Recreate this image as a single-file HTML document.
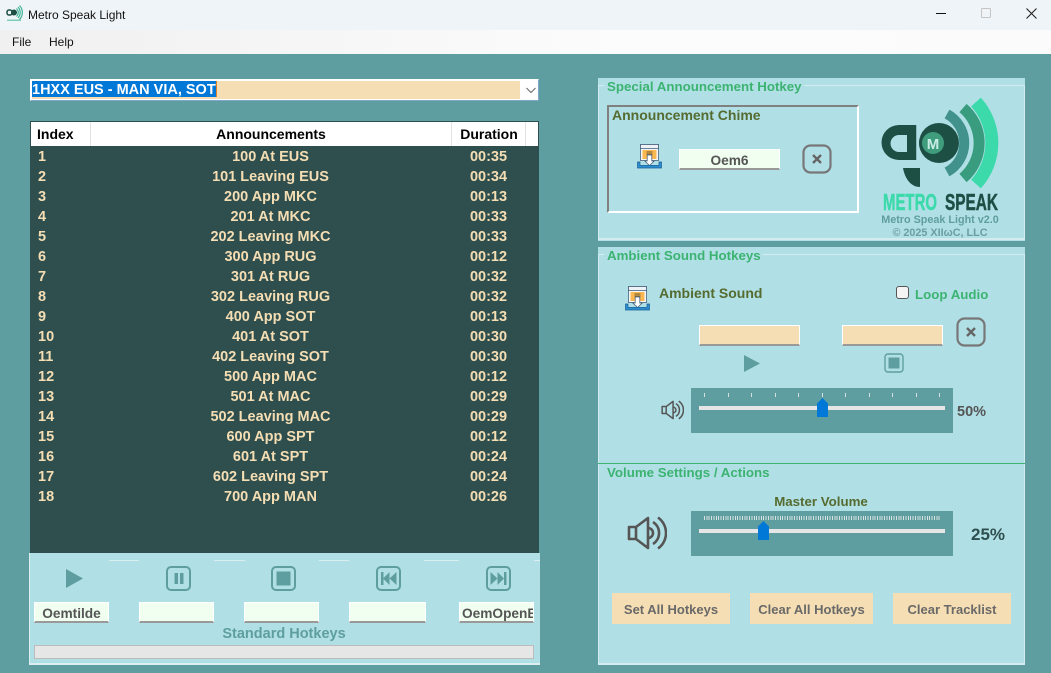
<!DOCTYPE html>
<html><head><meta charset="utf-8"><style>
html,body{margin:0;padding:0}
body{width:1051px;height:673px;overflow:hidden;position:relative;background:#5f9ea0;font-family:"Liberation Sans",sans-serif;font-size:13.3px;font-weight:bold}
.a{position:absolute;box-sizing:border-box}
.t{position:absolute;white-space:nowrap;line-height:16px;height:16px;margin-top:1px}
.c{transform:translateX(-50%)}
.g{color:#3cb371}.o{color:#556b2f}
.h{font-size:14px}
.k{position:absolute;box-sizing:border-box;height:21px;background:#f0fff0;border:2px solid #fff;border-width:1px 1px 2px 1px;border-bottom-color:#999;text-align:center;line-height:21px;color:#555;overflow:hidden;white-space:nowrap;font-size:13.7px}
.w{background:#f5deb3}
.b{position:absolute;background:#f5deb3;color:#696969;text-align:center;height:31px;line-height:33px;font-size:13px}
.l{position:absolute;background:#dceef0;height:1px}
.r{position:absolute;left:30px;width:509px;height:20px;line-height:22px;color:#f5deb3;font-size:14.5px}
.r i{font-style:normal;position:absolute;left:8px}
.r u{text-decoration:none;position:absolute;left:60px;width:361px;text-align:center}
.r s{text-decoration:none;position:absolute;left:421px;width:75px;text-align:center}
svg{position:absolute;overflow:visible}
</style></head><body>
<svg width="0" height="0" style="position:absolute"><defs>
<symbol id="file" viewBox="0 0 25 25"><rect x="3.500" y="0.500" width="18" height="16" fill="#f4f7fa" stroke="#47617c" stroke-width=".8"/><rect x="3.500" y="0.500" width="18" height="4" fill="#eef2f6" stroke="#47617c" stroke-width=".8"/><rect x="5.500" y="6" width="14" height="9" fill="#fbb850"/><path d="M9.500 8h6M9.500 10h6" stroke="#6a5a30" stroke-width=".9"/><path d="M10.200 11h4.600v6h2.400l-4.700 4.500L7.800 17h2.400z" fill="#fff" stroke="#47617c" stroke-width=".8"/><path d="M.5 18v6h24v-6h-2.500v3.300H3V18z" fill="#2b8fcf" stroke="#1c5c92" stroke-width=".7"/></symbol>
<symbol id="spk" viewBox="0 0 40 34"><path d="M2 11h7L21 2v30L9 23H2z M9 11v12" fill="none" stroke="#555" stroke-width="2.600" stroke-linejoin="round"/><path d="M21 12a5 5 0 0 1 0 10M26 6a13 13 0 0 1 0 22M31 1.500a19 19 0 0 1 0 31" fill="none" stroke="#555" stroke-width="2.600"/></symbol>
<symbol id="x" viewBox="0 0 30 30"><rect x="1.500" y="1.500" width="27" height="27" rx="7" fill="none" stroke="#777" stroke-width="2.200"/><path d="M11 11l8 8M19 11l-8 8" stroke="#666" stroke-width="2.400"/></symbol>
</defs></svg>

<!-- title bar -->
<div class="a" style="left:0;top:0;width:1051px;height:30px;background:#eff4f8"></div>
<div class="a" style="left:0;top:30px;width:1051px;height:24px;background:linear-gradient(90deg,#f0f0f0,#fcfcfc 60%,#fbfbfb)"></div>
<svg style="left:6px;top:5px" width="18" height="17" viewBox="0 0 18 17"><circle cx="8" cy="7.500" r="3" fill="#1d4f45"/><rect x="1" y="5" width="5" height="5" rx="2" fill="none" stroke="#1d4f45" stroke-width="1.500"/><path d="M10.500 3.500a5.500 5.500 0 0 1 0 8M12 2a8 8 0 0 1 0 11M13.500 .5a10 10 0 0 1 0 14" fill="none" stroke="#3cb393" stroke-width="1.200"/><rect x="1" y="14.500" width="14" height="1.500" fill="#7fcdb8"/></svg>
<div class="t" style="left:28px;top:6px;font-weight:normal;font-size:12px;color:#111">Metro Speak Light</div>
<div class="t" style="left:12px;top:33px;font-weight:normal;font-size:12px;color:#111">File</div>
<div class="t" style="left:49px;top:33px;font-weight:normal;font-size:12px;color:#111">Help</div>
<svg style="left:936px;top:8px" width="100" height="14"><path d="M0 5.500h10" stroke="#111" stroke-width="1"/><rect x="45.500" y=".5" width="9" height="9" rx="1" fill="none" stroke="#c4c4c4"/><path d="M90.500 .5l10 10M100.500 .5l-10 10" stroke="#222" stroke-width="1.100"/></svg>

<!-- combo -->
<div class="a" style="left:30px;top:79px;width:509px;height:22px;background:#fff;border:1px solid #fff;border-right-color:#7fa8c8;border-bottom-color:#7fa8c8"></div>
<div class="a w" style="left:32px;top:81px;width:488px;height:18px"></div>
<div class="a" style="left:32px;top:81px;width:185px;height:16px;background:#0078d7;border-right:1px solid #e08020"></div>
<div class="t" style="left:32px;top:81px;color:#fff;font-size:14.500px;width:185px">1HXX EUS - MAN VIA, SOT</div>
<svg style="left:526px;top:87px" width="10" height="7"><path d="M.5 1l4.500 4.500L9.500 1" fill="none" stroke="#666"/></svg>

<!-- table -->
<div class="a" style="left:30px;top:121px;width:509px;height:432px;background:#2f4f4f"></div>
<div class="a" style="left:31px;top:122px;width:507px;height:24px;background:#fff"></div>
<div class="a" style="left:90px;top:122px;width:1px;height:24px;background:#e3e3e3"></div>
<div class="a" style="left:451px;top:122px;width:1px;height:24px;background:#e3e3e3"></div>
<div class="a" style="left:525px;top:122px;width:1px;height:24px;background:#e3e3e3"></div>
<div class="t h" style="left:37px;top:125px;color:#000">Index</div>
<div class="t c h" style="left:271px;top:125px;color:#000">Announcements</div>
<div class="t c h" style="left:489px;top:125px;color:#000">Duration</div>
<div class="r" style="top:146px"><i>1</i><u>100 At EUS</u><s>00:35</s></div>
<div class="r" style="top:166px"><i>2</i><u>101 Leaving EUS</u><s>00:34</s></div>
<div class="r" style="top:186px"><i>3</i><u>200 App MKC</u><s>00:13</s></div>
<div class="r" style="top:206px"><i>4</i><u>201 At MKC</u><s>00:33</s></div>
<div class="r" style="top:226px"><i>5</i><u>202 Leaving MKC</u><s>00:33</s></div>
<div class="r" style="top:246px"><i>6</i><u>300 App RUG</u><s>00:12</s></div>
<div class="r" style="top:266px"><i>7</i><u>301 At RUG</u><s>00:32</s></div>
<div class="r" style="top:286px"><i>8</i><u>302 Leaving RUG</u><s>00:32</s></div>
<div class="r" style="top:306px"><i>9</i><u>400 App SOT</u><s>00:13</s></div>
<div class="r" style="top:326px"><i>10</i><u>401 At SOT</u><s>00:30</s></div>
<div class="r" style="top:346px"><i>11</i><u>402 Leaving SOT</u><s>00:30</s></div>
<div class="r" style="top:366px"><i>12</i><u>500 App MAC</u><s>00:12</s></div>
<div class="r" style="top:386px"><i>13</i><u>501 At MAC</u><s>00:29</s></div>
<div class="r" style="top:406px"><i>14</i><u>502 Leaving MAC</u><s>00:29</s></div>
<div class="r" style="top:426px"><i>15</i><u>600 App SPT</u><s>00:12</s></div>
<div class="r" style="top:446px"><i>16</i><u>601 At SPT</u><s>00:24</s></div>
<div class="r" style="top:466px"><i>17</i><u>602 Leaving SPT</u><s>00:24</s></div>
<div class="r" style="top:486px"><i>18</i><u>700 App MAN</u><s>00:26</s></div>

<!-- left bottom panel -->
<div class="a" style="left:29px;top:553px;width:511px;height:112px;background:#b0e0e6;border-left:1px solid #dceef0;border-bottom:2px solid #dceef0"></div>
<div class="l" style="left:109px;top:560px;width:30px"></div>
<div class="l" style="left:214px;top:560px;width:31px"></div>
<div class="l" style="left:319px;top:560px;width:30px"></div>
<div class="l" style="left:424px;top:560px;width:35px"></div>
<div class="l" style="left:534px;top:560px;width:6px"></div>
<svg style="left:66px;top:569px" width="18" height="20"><path d="M0 0l17 9.500L0 19z" fill="#5f9ea0"/></svg>
<svg style="left:166px;top:566px" width="26" height="26" fill="none"><rect x="1" y="1" width="23" height="23" rx="4" stroke="#5f9ea0" stroke-width="2"/><path d="M8.500 7h3.500v11H8.500zM14 7h3.500v11H14z" fill="#5f9ea0"/></svg>
<svg style="left:271px;top:566px" width="26" height="26" fill="none"><rect x="1" y="1" width="23" height="23" rx="4" stroke="#5f9ea0" stroke-width="2"/><rect x="5.500" y="5.500" width="14" height="14" fill="#5f9ea0"/></svg>
<svg style="left:376px;top:566px" width="26" height="26" fill="none"><rect x="1" y="1" width="23" height="23" rx="4" stroke="#5f9ea0" stroke-width="2"/><path d="M5 6h2.500v13H5zM13.500 6v13L7 12.500zM20.500 6v13l-7-6.500z" fill="#5f9ea0"/></svg>
<svg style="left:486px;top:566px" width="26" height="26" fill="none"><rect x="1" y="1" width="23" height="23" rx="4" stroke="#5f9ea0" stroke-width="2"/><path d="M4.500 6v13l7-6.500zM11.500 6v13l6.500-6.500zM18 6h2.500v13H18z" fill="#5f9ea0"/></svg>
<div class="k" style="left:34px;top:602px;width:75px">Oemtilde</div>
<div class="k" style="left:139px;top:602px;width:75px"></div>
<div class="k" style="left:244px;top:602px;width:75px"></div>
<div class="k" style="left:349px;top:602px;width:77px"></div>
<div class="k" style="left:459px;top:602px;width:75px;text-align:left;padding-left:2px">OemOpenBrackets</div>
<div class="t c" style="left:284px;top:625px;color:#5f9ea0;font-size:14.500px">Standard Hotkeys</div>
<div class="a" style="left:34px;top:645px;width:500px;height:14px;background:#e6e6e6;border:1px solid #bcbcbc"></div>

<!-- right panel 1 -->
<div class="a" style="left:598px;top:78px;width:427px;height:163px;background:#b0e0e6"></div>
<div class="a" style="left:598px;top:85px;width:427px;height:155px;border:1px solid #d4ecef;border-bottom-width:2px"></div>
<div class="a" style="left:604px;top:80px;width:200px;height:10px;background:#b0e0e6"></div>
<div class="t g" style="left:607px;top:78px">Special Announcement Hotkey</div>
<div class="a" style="left:607px;top:105px;width:252px;height:108px;border:2px solid;border-color:#808080 #fff #fff #808080"></div>
<div class="t o h" style="left:612px;top:106px">Announcement Chime</div>
<svg style="left:637px;top:144px" width="25" height="25"><use href="#file" width="25" height="25"/></svg>
<div class="k" style="left:679px;top:149px;width:101px">Oem6</div>
<svg style="left:802px;top:144px" width="30" height="30"><use href="#x" width="30" height="30"/></svg>

<!-- logo -->
<svg style="left:870px;top:90px" width="145" height="130" viewBox="870 90 145 130">
<path d="M917 125h-18a17.500 17.500 0 0 0 0 35h18z" fill="#1d4f45"/>
<path d="M907 135h-8a8.500 8.500 0 0 0 0 17h8z" fill="#b0e0e6"/>
<circle cx="939" cy="143" r="20" fill="#1d4f45"/>
<path d="M917 125v35" stroke="#b0e0e6" stroke-width="1.500"/>
<circle cx="933" cy="143" r="14" fill="#1d4f45"/>
<circle cx="933" cy="143" r="11" fill="#3f9d7d"/>
<text x="933" y="149" text-anchor="middle" font-size="15" fill="#c9ece6" font-family="Liberation Sans">M</text>
<path d="M903 168h17v19c-9 0-15-8-17-19z" fill="#1d4f45"/>
<path d="M947 114A33 33 0 0 1 947 172" fill="none" stroke="#41918d" stroke-width="10"/>
<path d="M963 108A46 46 0 0 1 963 178" fill="none" stroke="#3a9c7e" stroke-width="11"/>
<path d="M976 102A61 61 0 0 1 976 184" fill="none" stroke="#3cd9ab" stroke-width="13"/>
<text x="883" y="210" font-size="23.500" fill="#3cd9ab" stroke="#3cd9ab" stroke-width=".5" textLength="54" lengthAdjust="spacingAndGlyphs" font-family="Liberation Sans">METRO</text>
<text x="945" y="210" font-size="23.500" fill="#1d4f45" stroke="#1d4f45" stroke-width=".5" textLength="53" lengthAdjust="spacingAndGlyphs" font-family="Liberation Sans">SPEAK</text>
</svg>
<div class="t c" style="left:940px;top:211px;font-size:10.800px;color:#5f9ea0">Metro Speak Light v2.0</div>
<div class="t c" style="left:940px;top:224px;font-size:10.800px;color:#6a9ea0">© 2025 XIIωC, LLC</div>

<!-- right panel 2 + 3 -->
<div class="a" style="left:598px;top:247px;width:427px;height:418px;background:#b0e0e6"></div>
<div class="a" style="left:598px;top:254px;width:427px;height:210px;border:1px solid #d4ecef;border-bottom:0"></div>
<div class="a" style="left:604px;top:250px;width:158px;height:8px;background:#b0e0e6"></div>
<div class="t g" style="left:607px;top:247px">Ambient Sound Hotkeys</div>
<svg style="left:625px;top:286px" width="25" height="25"><use href="#file" width="25" height="25"/></svg>
<div class="t o h" style="left:659px;top:284px">Ambient Sound</div>
<div class="a" style="left:896px;top:286px;width:13px;height:13px;background:#f4f4f4;border:1px solid #555;border-radius:3px"></div>
<div class="t g" style="left:915px;top:286px">Loop Audio</div>
<div class="k w" style="left:699px;top:325px;width:101px"></div>
<div class="k w" style="left:842px;top:325px;width:101px"></div>
<svg style="left:956px;top:317px" width="30" height="30"><use href="#x" width="30" height="30"/></svg>
<svg style="left:744px;top:355px" width="17" height="18"><path d="M0 0l16 8.500L0 17z" fill="#5f9ea0"/></svg>
<svg style="left:884px;top:353px" width="20" height="20" fill="none"><rect x="1" y="1" width="18" height="18" rx="3" stroke="#5f9ea0" stroke-width="1.400"/><rect x="4.500" y="4.500" width="11" height="11" fill="#5f9ea0"/></svg>
<div class="a" style="left:691px;top:388px;width:262px;height:45px;background:#5f9ea0"></div>
<svg style="left:691px;top:388px" width="262" height="45"><path d="M13.500 5v4M37.500 5v4M60.500 5v4M84.500 5v4M107.500 5v4M131.500 5v4M154.500 5v4M178.500 5v4M201.500 5v4M225.500 5v4M248.500 5v4" stroke="#d8e0e0"/></svg>
<div class="a" style="left:699px;top:406px;width:246px;height:4px;background:#e6e6e6"></div>
<svg style="left:817px;top:398px" width="11" height="19"><path d="M0 5.500L5.500 0 11 5.500V19H0z" fill="#0078d7"/></svg>
<svg style="left:661px;top:400px" width="23" height="20"><use href="#spk" width="23" height="20"/></svg>
<div class="t" style="left:957px;top:403px;color:#555;font-size:14.500px">50%</div>

<div class="a" style="left:598px;top:463px;width:427px;height:1px;background:#3cb371"></div>
<div class="a" style="left:598px;top:464px;width:427px;height:201px;border:1px solid #d4ecef;border-top:0;border-bottom-width:2px"></div>
<div class="t g" style="left:607px;top:464px">Volume Settings / Actions</div>
<div class="t c o" style="left:821px;top:493px">Master Volume</div>
<div class="a" style="left:691px;top:511px;width:262px;height:45px;background:#5f9ea0"></div>
<div class="a" style="left:704px;top:516px;width:237px;height:4px;background:repeating-linear-gradient(90deg,#d8e0e0 0,#d8e0e0 1px,transparent 1px,transparent 2.370px)"></div>
<div class="a" style="left:699px;top:529px;width:246px;height:4px;background:#e6e6e6"></div>
<svg style="left:758px;top:521px" width="11" height="19"><path d="M0 5.500L5.500 0 11 5.500V19H0z" fill="#0078d7"/></svg>
<svg style="left:627px;top:516px" width="40" height="34"><use href="#spk" width="40" height="34"/></svg>
<div class="t" style="left:971px;top:525px;font-size:17px;color:#2f4f4f;line-height:18px;height:18px">25%</div>
<div class="b" style="left:612px;top:593px;width:118px">Set All Hotkeys</div>
<div class="b" style="left:750px;top:593px;width:123px">Clear All Hotkeys</div>
<div class="b" style="left:893px;top:593px;width:118px">Clear Tracklist</div>
</body></html>
